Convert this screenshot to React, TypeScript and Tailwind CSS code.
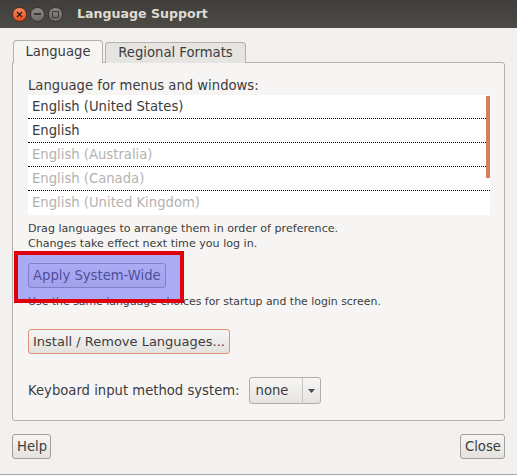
import React from 'react';

const languages = [
  { name: 'English (United States)', enabled: true },
  { name: 'English', enabled: true },
  { name: 'English (Australia)', enabled: false },
  { name: 'English (Canada)', enabled: false },
  { name: 'English (United Kingdom)', enabled: false },
];

const btn =
  'h-[25px] px-[4px] rounded-[3px] border bg-gradient-to-b from-[#f7f6f5] to-[#e4e2df] text-[#3c3c3c] leading-none';

const App: React.FC = () => {
  return (
    <div
      className="w-[517px] h-[475px] bg-[#f2f1f0] flex flex-col text-[13.2px] text-[#3c3c3c] border-b border-[#a8a6a1]"
      style={{ fontFamily: '"DejaVu Sans", sans-serif' }}
    >
      {/* Title bar */}
      <div className="h-[28px] shrink-0 bg-gradient-to-b from-[#3f3e3a] to-[#4c4b46] flex items-center pl-[12px]">
        <div className="w-[15px] h-[15px] rounded-full bg-gradient-to-b from-[#f58a5c] to-[#df4a1d] border border-[#5a2a18] flex items-center justify-center">
          <svg width="7" height="7" viewBox="0 0 7 7">
            <path d="M1 1 L6 6 M6 1 L1 6" stroke="#3a1a10" strokeWidth="1.4" />
          </svg>
        </div>
        <div className="ml-[3px] w-[15px] h-[15px] rounded-full bg-gradient-to-b from-[#8a8984] to-[#6c6b66] border border-[#35342f] flex items-center justify-center">
          <div className="w-[7px] h-[2px] bg-[#3a3935]" />
        </div>
        <div className="ml-[3px] w-[15px] h-[15px] rounded-full bg-gradient-to-b from-[#8a8984] to-[#6c6b66] border border-[#35342f] flex items-center justify-center">
          <div className="w-[7px] h-[7px] border border-[#3a3935]" />
        </div>
        <span className="ml-[14px] font-bold text-[#dfdbd2] text-[12.6px]">Language Support</span>
      </div>

      {/* Body */}
      <div className="flex-1 flex flex-col px-[12px] pt-[12px]">
        {/* Tabs */}
        <div className="flex items-end h-[23px] pl-[1px] -mb-px relative z-10">
          <div className="h-[23px] w-[90px] flex items-center justify-center bg-[#f6f5f4] border border-b-0 border-[#b3b1ac] rounded-t-[4px]">
            Language
          </div>
          <div className="h-[21px] w-[141px] ml-[2px] flex items-center justify-center bg-[#e6e4e1] border border-b-0 border-[#b3b1ac] rounded-t-[4px]">
            Regional Formats
          </div>
        </div>

        {/* Notebook panel */}
        <div className="h-[359px] bg-[#f6f5f4] border border-[#b3b1ac] rounded-[3px] rounded-tl-none flex flex-col pl-[15px] pr-[14px] pt-[15px]">
          <div className="leading-[16px]">Language for menus and windows:</div>
          <div className="relative mt-[1px] w-[462px] bg-white">
            {languages.map((l, i) => (
              <div
                key={l.name}
                className={`h-[24px] flex items-center pl-[4px] ${i < languages.length - 1 ? 'border-b border-dotted border-black' : ''} ${l.enabled ? 'text-[#3c3c3c]' : 'text-[#b4b2ae]'}`}
              >
                {l.name}
              </div>
            ))}
            <div className="absolute right-0 top-[1px] w-[4px] h-[82px] bg-[#d4805a]" />
          </div>

          <div className="mt-[6px] leading-[15px] text-[11.1px]">
            <div>Drag languages to arrange them in order of preference.</div>
            <div>Changes take effect next time you log in.</div>
          </div>

          <div className="relative mt-[12px]">
            <button className={`${btn} border-[#a19f9a]`}>Apply System-Wide</button>
            <div className="leading-[15px] text-[10.9px] mt-[6px]">
              Use the same language choices for startup and the login screen.
            </div>
            {/* Highlight overlay */}
            <div className="absolute left-[-14px] top-[-12px] w-[170px] h-[52px] border-[4px] border-[#e0000c] bg-[rgba(96,95,246,0.5)]" />
          </div>

          <div className="mt-[20px]">
            <button className={`${btn} border-[#e0907a] text-[13px]`}>Install / Remove Languages...</button>
          </div>

          <div className="mt-[23px] flex items-center">
            <span>Keyboard input method system:</span>
            <div className="ml-[9px] h-[27px] w-[72px] rounded-[3px] border border-[#b0aeaa] bg-gradient-to-b from-[#f7f6f5] to-[#e6e4e1] flex items-center">
              <span className="pl-[6px] w-[52px]">none</span>
              <div className="h-full border-l border-[#c8c6c2] flex-1 flex items-center justify-center">
                <svg width="7" height="4" viewBox="0 0 7 4">
                  <path d="M0 0 L7 0 L3.5 4 Z" fill="#4c4c4c" />
                </svg>
              </div>
            </div>
          </div>
        </div>

        {/* Footer */}
        <div className="flex justify-between mt-[13px]">
          <button className={`${btn} w-[39px] border-[#a19f9a]`}>Help</button>
          <button className={`${btn} w-[45px] border-[#a19f9a]`}>Close</button>
        </div>
      </div>
    </div>
  );
};

export default App;
